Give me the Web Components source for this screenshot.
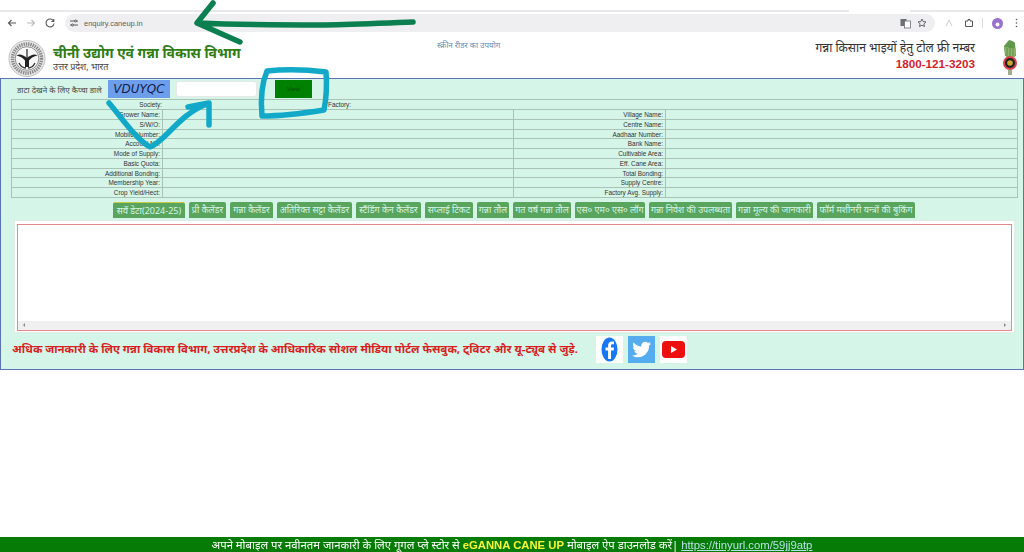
<!DOCTYPE html>
<html lang="hi">
<head>
<meta charset="utf-8">
<title>Cane enquiry</title>
<style>
  html, body { margin: 0; padding: 0; height: 100%; background: #fff; }
  body { font-family: "Liberation Sans", "Noto Sans", sans-serif; overflow: hidden; }
</style>
</head>
<body>
<cane-page>
  <browser-bar slot="bar" url="enquiry.caneup.in"></browser-bar>
  <site-header slot="head"></site-header>
  <main-panel slot="main">
    <captcha-row code="VDUYQC"></captcha-row>
    <farmer-table></farmer-table>
    <tab-strip></tab-strip>
    <result-box></result-box>
    <social-row></social-row>
  </main-panel>
  <footer-bar slot="foot"></footer-bar>
  <ink-notes slot="ink"></ink-notes>
</cane-page>

<script>
class CanePage extends HTMLElement {
    constructor() {
        super();
        this.attachShadow({ mode: 'open' });
        this.shadowRoot.innerHTML = `
            <style>
                :host { display: flex; flex-direction: column; position: relative; width: 1024px; height: 552px; overflow: hidden; filter: blur(.3px); }
                .grow { flex: 1; }
            </style>
            <slot name="bar"></slot>
            <slot name="head"></slot>
            <slot name="main"></slot>
            <div class="grow"></div>
            <slot name="foot"></slot>
            <slot name="ink"></slot>
        `;
    }
}

class BrowserBar extends HTMLElement {
    constructor() {
        super();
        this.attachShadow({ mode: 'open' });
    }

    connectedCallback() {
        this.shadowRoot.innerHTML = `
            <style>
                :host { display: block; height: 37px; box-sizing: border-box; padding-top: 10px; background: #fff; }
                .edge { height: 2px; background: linear-gradient(90deg, #e8e8ea 849px, #fff 849px, #fff 910px, #e8e8ea 910px); }
                .bar { height: 25px; box-sizing: border-box; display: flex; align-items: center; padding: 0 0 3px 6px; }
                .nav { display: flex; align-items: center; gap: 7px; margin-right: 9px; }
                svg { display: block; flex: none; }
                .pill { flex: none; width: 870px; height: 18px; border-radius: 9px; background: #efeff1; display: flex; align-items: center; padding: 0 8px 0 4px; box-sizing: border-box; gap: 5px; }
                .url { font: 7.5px "Liberation Sans", sans-serif; color: #5c5f63; flex: 1; }
                .tools { display: flex; align-items: center; margin-left: 6px; }
            </style>
            <div class="edge"></div>
            <div class="bar">
                <div class="nav">
                    <svg width="12" height="12" viewBox="0 0 12 12" fill="none" stroke="#55585c" stroke-width="1.1"><path d="M10 6H2.500M5.500 3 2.500 6l3 3"/></svg>
                    <svg width="12" height="12" viewBox="0 0 12 12" fill="none" stroke="#b9bbbf" stroke-width="1.1"><path d="M2 6h7.500M6.500 3l3 3-3 3"/></svg>
                    <svg width="12" height="12" viewBox="0 0 12 12" fill="none" stroke="#55585c" stroke-width="1.1"><path d="M9.600 4.200A4 4 0 1 0 10 6.500M9.800 2v2.500H7.300"/></svg>
                </div>
                <div class="pill">
                    <svg width="10" height="10" viewBox="0 0 10 10" fill="none" stroke="#55585c" stroke-width="1"><path d="M1 3h4.500M7.500 3H9M1 7h1.500M4.500 7H9"/><circle cx="6.500" cy="3" r="1"/><circle cx="3.500" cy="7" r="1"/></svg>
                    <span class="url">${this.getAttribute('url')}</span>
                    <svg width="11" height="11" viewBox="0 0 11 11"><rect x="0.500" y="1" width="6" height="7" fill="#6b6e72"/><rect x="4.500" y="3" width="6" height="7" fill="#fff" stroke="#6b6e72" stroke-width=".8"/></svg>
                    <svg style="margin-left:1px" width="10" height="10" viewBox="0 0 10 10" fill="none" stroke="#55585c" stroke-width=".9"><path d="M5 1l1.200 2.600 2.800.3-2.100 1.900.6 2.800L5 7.200 2.500 8.600l.6-2.800L1 3.900l2.800-.3z"/></svg>
                </div>
                <div class="tools">
                    <svg style="margin-left:3px" width="10" height="10" viewBox="0 0 10 10" fill="none" stroke="#c4c6c9" stroke-width=".9"><path d="M2 8 5 2l3 6"/></svg>
                    <svg style="margin-left:10px" width="10" height="10" viewBox="0 0 10 10" fill="none" stroke="#55585c" stroke-width="1"><path d="M1.500 3H4V1.500h2V3h2.500v5.500h-7z"/></svg>
                    <div style="width:1px;height:10px;background:#dcdde0;margin-left:8px"></div>
                    <svg style="margin-left:9px" width="11" height="11" viewBox="0 0 11 11"><circle cx="5.500" cy="5.500" r="5.500" fill="#9a6fd0"/><circle cx="5.500" cy="6.500" r="2" fill="#fff"/></svg>
                    <svg style="margin-left:12px" width="3" height="10" viewBox="0 0 3 10" fill="#55585c"><circle cx="1.500" cy="1.500" r=".8"/><circle cx="1.500" cy="5" r=".8"/><circle cx="1.500" cy="8.500" r=".8"/></svg>
                </div>
            </div>
        `;
    }
}

class SiteHeader extends HTMLElement {
    constructor() {
        super();
        this.attachShadow({ mode: 'open' });
        this.shadowRoot.innerHTML = `
            <style>
                :host { display: flex; height: 41px; box-sizing: border-box; padding: 3px 6px 1px 8px; background: #fff; align-items: flex-start; }
                .title { margin-left: 7px; padding-top: 5px; width: 384px; flex: none; }
                h1 { margin: 0; font: bold 13.900px/16px "Noto Sans", "Liberation Sans", sans-serif; color: #2f7d14; white-space: nowrap; }
                .sub { margin-top: 1px; font: 9px/10px "Noto Sans", "Liberation Sans", sans-serif; color: #444; white-space: nowrap; }
                .reader { font: 8px/10px "Noto Sans", "Liberation Sans", sans-serif; color: #5d8db5; white-space: nowrap; width: 200px; flex: none; }
                .toll { flex: 1; text-align: right; margin-right: -1px; }
                .toll div { font: 12.100px/16px "Noto Sans", "Liberation Sans", sans-serif; color: #333; white-space: nowrap; }
                .toll b { display: block; font: bold 11.7px/15px "Liberation Sans", sans-serif; color: #d4232e; }
                svg { display: block; flex: none; }
            </style>
            <svg width="38" height="37" viewBox="0 0 38 37">
                <circle cx="19" cy="18.500" r="18" fill="#e8e8e8" stroke="#c2c2c2"/>
                <circle cx="19" cy="18.500" r="14.500" fill="none" stroke="#8a8a8a" stroke-width="3.500" stroke-dasharray="1.400 .9"/>
                <circle cx="19" cy="18.500" r="11.800" fill="#f7f7f7" stroke="#666" stroke-width=".7"/>
                <path d="M8.500 15.500C12 13 15 15.500 19 17.500 23 15.500 26 13 29.500 15.500 26 16 23 18 21 20.500V27H17V20.500C15 18 12 16 8.500 15.500Z" fill="#222"/>
                <path d="M19 9v8" stroke="#222" stroke-width="1.200"/>
                <path d="M11 23c2 4 5 5 7 5M27 23c-2 4-5 5-7 5" fill="none" stroke="#333" stroke-width="1.300"/>
            </svg>
            <div class="title">
                <h1>चीनी उद्योग एवं गन्ना विकास विभाग</h1>
                <div class="sub">उत्तर प्रदेश, भारत</div>
            </div>
            <div class="reader">स्क्रीन रीडर का उपयोग</div>
            <div class="toll">
                <div>गन्ना किसान भाइयों हेतु टोल फ्री नम्बर</div>
                <b>1800-121-3203</b>
            </div>
            <svg style="margin-left:28px" width="16" height="36" viewBox="0 0 16 36">
                <path d="M7 0c3 .5 5 1.500 6 3l1 13H3L2 6z" fill="#5f9a4b"/>
                <path d="M2 7l12 1.500L13 17H4z" fill="#8db36c"/>
                <path d="M5 8v8M8 5v11M11 7v9" stroke="#4f8a3e" stroke-width=".8"/>
                <circle cx="8" cy="23" r="7" fill="#d9404a"/>
                <circle cx="8" cy="23" r="5" fill="#1f1f1f"/>
                <circle cx="8" cy="23" r="2.800" fill="#c9a92c"/>
                <path d="M6 30h4v5H6z" fill="#9db08a"/>
            </svg>
        `;
    }
}

class MainPanel extends HTMLElement {
    constructor() {
        super();
        this.attachShadow({ mode: 'open' });
        this.shadowRoot.innerHTML = `
            <style>
                :host { display: block; box-sizing: border-box; height: 292px; background: #d5f5e8; border: 1px solid #5b73b5; padding: 1px 5px 0 10px; }
            </style>
            <slot></slot>
        `;
    }
}

class CaptchaRow extends HTMLElement {
    constructor() {
        super();
        this.attachShadow({ mode: 'open' });
    }

    connectedCallback() {
        this.shadowRoot.innerHTML = `
            <style>
                :host { display: flex; align-items: center; height: 18px; margin-left: -10px; }
                label { font: 8.100px "Noto Sans", "Liberation Sans", sans-serif; color: #444; width: 107px; padding-left: 16px; box-sizing: border-box; white-space: nowrap; flex: none; }
                .code { width: 62px; height: 18px; background: #6d9eeb; font: italic 12px/19px "DejaVu Sans", sans-serif; color: #14204a; text-align: center; flex: none; }
                .entry { width: 81px; height: 16px; margin-left: 6px; box-sizing: border-box; border: 1px solid #e8e8e8; border-radius: 3px; background: #fff; flex: none; }
                button { width: 37px; height: 18px; margin-left: 18px; padding: 0; border: 0; background: #008000; font: 6px "Liberation Sans", sans-serif; color: #0a4a0a; flex: none; }
            </style>
            <label>डाटा देखने के लिए कैप्चा डाले</label>
            <div class="code">${this.getAttribute('code')}</div>
            <input class="entry" aria-label="captcha">
            <button>View</button>
        `;
    }
}

class FarmerTable extends HTMLElement {
    constructor() {
        super();
        this.attachShadow({ mode: 'open' });
    }

    connectedCallback() {
        const rows = [
            ['Grower Name:', 'Village Name:'],
            ['S/W/O:', 'Centre Name:'],
            ['Mobile Number:', 'Aadhaar Number:'],
            ['Account No:', 'Bank Name:'],
            ['Mode of Supply:', 'Cultivable Area:'],
            ['Basic Quota:', 'Eff. Cane Area:'],
            ['Additional Bonding:', 'Total Bonding:'],
            ['Membership Year:', 'Supply Centre:'],
            ['Crop Yield/Hect:', 'Factory Avg. Supply:']
        ];
        const body = rows.map(r => `
            <div class="row">
                <div class="lab">${r[0]}</div><div class="val"></div>
                <div class="lab">${r[1]}</div><div class="val"></div>
            </div>`).join('');
        this.shadowRoot.innerHTML = `
            <style>
                :host { display: block; width: 1007px; margin-top: 1px; box-sizing: border-box; border: 1px solid #a9c4b6; font: 6.4px "Liberation Sans", sans-serif; color: #333; }
                .row { display: grid; grid-template-columns: 150px 352px 151px 1fr; height: 9.78px; line-height: 9px; box-sizing: border-box; border-top: 1px solid #a9c4b6; white-space: nowrap; }
                .first { display: grid; grid-template-columns: 150px 166px 1fr; height: 9px; line-height: 10px; white-space: nowrap; }
                .lab { text-align: right; padding-right: 2px; }
                .first .lab { padding-right: 0; }
                .val { border-left: 1px solid #a9c4b6; border-right: 1px solid #a9c4b6; }
                .row .val:last-child { border-right: 0; }
            </style>
            <div class="first"><div class="lab">Society:</div><div></div><div>Factory:</div></div>
            ${body}
        `;
    }
}

class TabButton extends HTMLElement {
    constructor() {
        super();
        this.attachShadow({ mode: 'open' });
        this.shadowRoot.innerHTML = `
            <style>
                :host { display: flex; align-items: center; justify-content: center; flex: none; height: 16px; box-sizing: border-box; background: #5aa55e; border-radius: 2px 2px 0 0; color: #d5f5e8; font: 9px "Noto Sans", "Liberation Sans", sans-serif; white-space: nowrap; overflow: hidden; }
                :host([active]) { border-top: 1px solid #c9c94a; }
            </style>
            <slot></slot>
        `;
    }
}

class TabStrip extends HTMLElement {
    constructor() {
        super();
        this.attachShadow({ mode: 'open' });
    }

    connectedCallback() {
        const tabs = [
            ['सर्वे डेटा(2024-25)', 72], ['प्री कैलेंडर', 37], ['गन्ना कैलेंडर', 43], ['अतिरिक्त सट्टा कैलेंडर', 75],
            ['स्टैंडिंग केन कैलेंडर', 65], ['सप्लाई टिकट', 48], ['गन्ना तौल', 32], ['गत वर्ष गन्ना तौल', 58],
            ['एस० एम० एस० लॉग', 70], ['गन्ना निवेश की उपलब्धता', 83], ['गन्ना मूल्य की जानकारी', 77], ['फॉर्म मशीनरी यन्त्रों की बुकिंग', 98]
        ];
        this.shadowRoot.innerHTML = `
            <style>
                :host { display: flex; gap: 4px; height: 16px; margin: 4px 0 0 102px; }
            </style>
            ${tabs.map((t, i) => `<tab-button style="width:${t[1]}px"${i === 0 ? ' active' : ''}>${t[0]}</tab-button>`).join('')}
        `;
    }
}

class ResultBox extends HTMLElement {
    constructor() {
        super();
        this.attachShadow({ mode: 'open' });
        this.shadowRoot.innerHTML = `
            <style>
                :host { display: block; width: 1001px; height: 113px; margin: 2px 0 0 3px; box-sizing: border-box; padding: 3px 2px 1px 2px; background: #fff; border: 1px solid #e2ece7; }
                .inner { height: 100%; box-sizing: border-box; border: 1px solid #e48a8a; display: flex; flex-direction: column; }
                .fill { flex: 1; }
                .scroll { height: 9px; background: #f0f0f0; display: flex; justify-content: space-between; align-items: center; padding: 0 3px; }
                .scroll span { width: 0; height: 0; border: 2px solid transparent; }
                .l { border-right-color: #888 !important; }
                .r { border-left-color: #888 !important; }
            </style>
            <div class="inner"><div class="fill"></div><div class="scroll"><span class="l"></span><span class="r"></span></div></div>
        `;
    }
}

class SocialRow extends HTMLElement {
    constructor() {
        super();
        this.attachShadow({ mode: 'open' });
        this.shadowRoot.innerHTML = `
            <style>
                :host { display: flex; align-items: center; height: 27px; margin: 3px 0 0 1px; }
                p { margin: 0 0 2px; width: 584px; flex: none; font: bold 11.400px "Noto Sans", "Liberation Sans", sans-serif; color: #d81f1f; white-space: nowrap; }
                .ico { display: flex; gap: 5px; }
                svg { display: block; }
            </style>
            <p>अधिक जानकारी के लिए गन्ना विकास विभाग, उत्तरप्रदेश के आधिकारिक सोशल मीडिया पोर्टल फेसबुक, ट्विटर और यू-ट्यूब से जुड़े.</p>
            <div class="ico">
                <svg width="27" height="27" viewBox="0 0 27 27"><rect width="27" height="27" fill="#fff"/><ellipse cx="13.500" cy="13.500" rx="8" ry="12" fill="#1877f2"/><path d="M15 23v-8.500h2.600l.4-3H15V9.700c0-.9.300-1.500 1.500-1.500H18V5.500c-.4 0-1.200-.1-2.100-.1-2.300 0-3.800 1.400-3.800 3.900v2.200H9.500v3h2.600V23z" fill="#fff"/></svg>
                <svg width="27" height="27" viewBox="0 0 27 27"><rect width="27" height="27" fill="#55acee"/><path d="M23 7.500c-.7.300-1.500.5-2.200.6.800-.5 1.400-1.200 1.700-2.100-.8.400-1.600.800-2.500 1a3.900 3.900 0 0 0-6.600 3.500C10.200 10.300 7.400 8.800 5.500 6.400c-1 1.800-.5 4 1.200 5.200-.6 0-1.200-.2-1.700-.5 0 1.900 1.300 3.500 3.100 3.900-.6.200-1.200.2-1.800.1.500 1.600 2 2.700 3.600 2.700A7.900 7.900 0 0 1 4 19.400 11 11 0 0 0 21 9.600c.8-.5 1.500-1.300 2-2.100z" fill="#fff"/></svg>
                <svg width="27" height="27" viewBox="0 0 27 27"><rect width="27" height="27" fill="#fff"/><rect x="2" y="5" width="23" height="17" rx="4" fill="#ee0f0f"/><path d="M11 10l6 3.500-6 3.500z" fill="#fff"/></svg>
            </div>
        `;
    }
}

class FooterBar extends HTMLElement {
    constructor() {
        super();
        this.attachShadow({ mode: 'open' });
        this.shadowRoot.innerHTML = `
            <style>
                :host { display: block; height: 15px; background: #067c06; color: #fff; text-align: center; font: 11.300px/15px "Noto Sans", "Liberation Sans", sans-serif; white-space: nowrap; }
                b { color: #f5f53c; font-family: "Liberation Sans", sans-serif; }
                a { color: #b8e0e8; font-family: "Liberation Sans", sans-serif; }
            </style>
            अपने मोबाइल पर नवीनतम जानकारी के लिए गूगल प्ले स्टोर से <b>eGANNA CANE UP</b> मोबाइल ऐप डाउनलोड करें| <a href="#">https://tinyurl.com/59jj9atp</a>
        `;
    }
}

// hand drawn marks on top of the screenshot
class InkNotes extends HTMLElement {
    constructor() {
        super();
        this.attachShadow({ mode: 'open' });
        this.shadowRoot.innerHTML = `
            <style>
                :host { position: absolute; left: 0; top: 0; width: 1024px; height: 552px; pointer-events: none; }
                svg { display: block; }
            </style>
            <svg width="1024" height="552" viewBox="0 0 1024 552" fill="none" stroke-linecap="round" stroke-linejoin="round">
                <path d="M413 22C380 23 350 25 320 25S240 25 199 23M213 3 197 23 240 42" stroke="#0c7f50" stroke-width="5.500"/>
                <path d="M267 71C285 69 310 70 326 72 327 85 326 100 324 110 305 113 280 116 262 116 261 105 261 85 267 71Z" stroke="#12a9c9" stroke-width="5.500"/>
                <path d="M109 103C122 118 135 138 150 147 165 142 178 115 207 104M188 107 209 103 209 125" stroke="#12a9c9" stroke-width="5.500"/>
            </svg>
        `;
    }
}

customElements.define('cane-page', CanePage);
customElements.define('browser-bar', BrowserBar);
customElements.define('site-header', SiteHeader);
customElements.define('main-panel', MainPanel);
customElements.define('captcha-row', CaptchaRow);
customElements.define('farmer-table', FarmerTable);
customElements.define('tab-button', TabButton);
customElements.define('tab-strip', TabStrip);
customElements.define('result-box', ResultBox);
customElements.define('social-row', SocialRow);
customElements.define('footer-bar', FooterBar);
customElements.define('ink-notes', InkNotes);
</script>
</body>
</html>
